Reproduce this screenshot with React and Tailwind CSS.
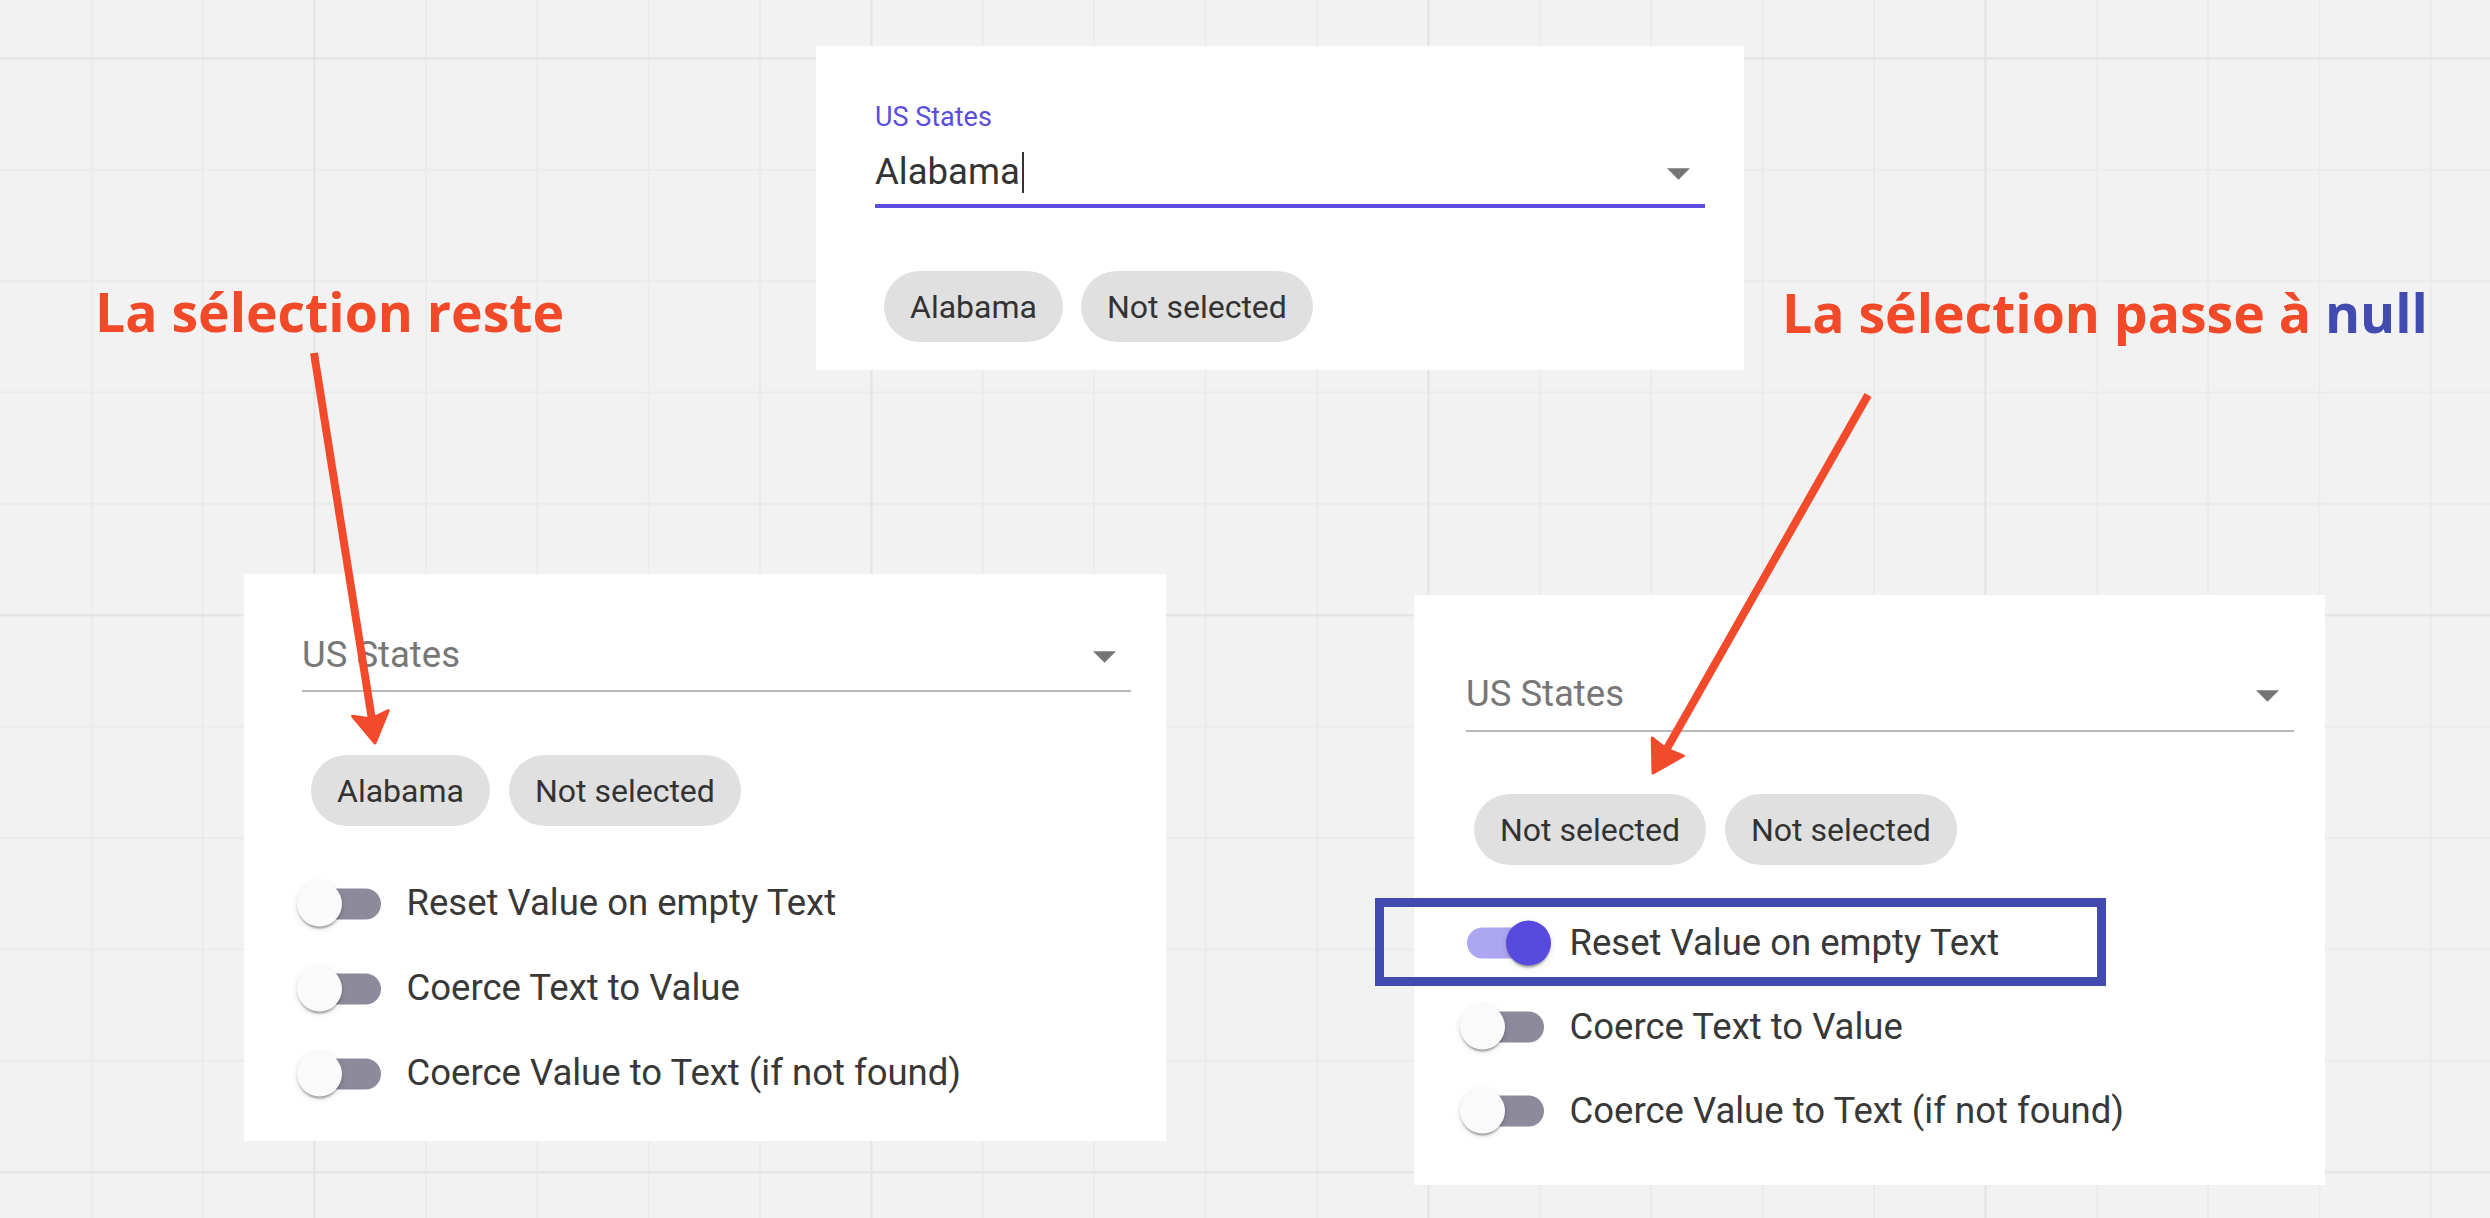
import React from 'react'

const PURPLE = '#5b4de0'

function Caret() {
  return <div className="w-[2px] h-[41px] bg-[#333] ml-[2px]" />
}

function DropArrow() {
  return (
    <svg width="23" height="12" viewBox="0 0 10 5" className="mt-[3px] mr-[15px] shrink-0">
      <path d="M0 0l5 5 5-5z" fill="#757575" />
    </svg>
  )
}

function Chip({ children }) {
  return (
    <div className="h-[71px] px-[26px] rounded-full bg-[#e0e0e0] flex items-center text-[32px] leading-none text-[#333] whitespace-nowrap">
      {children}
    </div>
  )
}

function Switch({ checked }) {
  return (
    <div className="relative w-[130px] h-full shrink-0">
      <div
        className={`absolute left-[27px] top-1/2 -translate-y-1/2 w-[77px] h-[31px] rounded-full ${checked ? 'bg-[#ada6f0]' : 'bg-[#8c8a9b]'}`}
      />
      <div
        className={`absolute top-1/2 -translate-y-1/2 w-[45px] h-[45px] rounded-full shadow-[0_4px_2px_-2px_rgba(0,0,0,0.2),0_2px_2px_0_rgba(0,0,0,0.14),0_2px_7px_0_rgba(0,0,0,0.12)] ${checked ? 'left-[66px] bg-[#584ade]' : 'left-[20.5px] bg-[#fafafa]'}`}
      />
    </div>
  )
}

function Options({ rowH, offset, firstOn }) {
  const rows = ['Reset Value on empty Text', 'Coerce Text to Value', 'Coerce Value to Text (if not found)']
  return (
    <div>
      {rows.map((label, i) => (
        <div key={label} className={`flex items-center ${rowH} ${offset}`}>
          <Switch checked={firstOn && i === 0} />
          <span className="text-[36.5px] leading-none text-[#383838] whitespace-nowrap">{label}</span>
        </div>
      ))}
    </div>
  )
}

export default function App() {
  return (
    <div className="relative w-[2490px] h-[1218px] overflow-hidden bg-[#f2f2f2] [font-family:Roboto,sans-serif] [background-image:linear-gradient(to_right,#e4e4e4_2px,transparent_2px),linear-gradient(to_bottom,#e4e4e4_2px,transparent_2px),linear-gradient(to_right,#ebebeb_2px,transparent_2px),linear-gradient(to_bottom,#ebebeb_2px,transparent_2px)] [background-size:557px_557px,557px_557px,111.4px_111.4px,111.4px_111.4px] [background-position:313.5px_0,0_57.3px,90.7px_0,0_57.3px]">
      <div className="pt-[46px]">
        {/* focused field */}
        <div className="ml-[816px] w-[928px] h-[324px] bg-white pl-[59px] pr-[39px] pt-[58px]">
          <div className="text-[27px] leading-[27px]" style={{ color: PURPLE }}>US States</div>
          <div className="mt-[21px] pb-[11px] border-b-4 border-[#5b4de0]">
            <div className="h-[41px] flex items-center justify-between">
              <div className="flex items-center">
                <span className="text-[36.5px] leading-none text-[#333]">Alabama</span>
                <Caret />
              </div>
              <DropArrow />
            </div>
          </div>
          <div className="mt-[63px] ml-[9px] flex gap-[18px]">
            <Chip>Alabama</Chip>
            <Chip>Not selected</Chip>
          </div>
        </div>

        <div className="flex items-start mt-[204px]">
          {/* selection stays */}
          <div className="ml-[244px] w-[922px] h-[567px] bg-white pl-[58px] pr-[35px] pt-[61px]">
            <div className="pb-[14px] border-b-2 border-[#b8b8b8]">
              <div className="h-[41px] flex items-center justify-between">
                <span className="text-[36.5px] leading-none text-[#777]">US States</span>
                <DropArrow />
              </div>
            </div>
            <div className="mt-[63px] ml-[9px] flex gap-[19px]">
              <Chip>Alabama</Chip>
              <Chip>Not selected</Chip>
            </div>
            <div className="mt-[35px]">
              <Options rowH="h-[85px]" offset="-ml-[25.5px]" />
            </div>
          </div>

          {/* selection goes null */}
          <div className="ml-[248px] mt-[21px] w-[911px] h-[590px] bg-white pl-[52px] pr-[31px] pt-[79px]">
            <div className="pb-[15px] border-b-2 border-[#b8b8b8]">
              <div className="h-[41px] flex items-center justify-between">
                <span className="text-[36.5px] leading-none text-[#777]">US States</span>
                <DropArrow />
              </div>
            </div>
            <div className="mt-[62px] ml-[8px] flex gap-[19px]">
              <Chip>Not selected</Chip>
              <Chip>Not selected</Chip>
            </div>
            <div className="mt-[36px]">
              <Options rowH="h-[84px]" offset="-ml-[26.5px]" firstOn />
            </div>
          </div>
        </div>
      </div>

      {/* annotations */}
      <div className="absolute left-[95px] top-[284.5px] text-[53.5px] leading-none font-bold text-[#f24a29] whitespace-nowrap [font-family:'Open_Sans',sans-serif]">
        La sélection reste
      </div>
      <div className="absolute left-[1782px] top-[285.5px] text-[53.5px] leading-none font-bold text-[#f24a29] whitespace-nowrap [font-family:'Open_Sans',sans-serif]">
        La sélection passe à <span className="text-[#414bb0]">null</span>
      </div>

      <div className="absolute left-[1375px] top-[898px] w-[731px] h-[88px] border-[9px] border-[#414bb0]" />

      <svg className="absolute inset-0 pointer-events-none" width="2490" height="1218">
        <line x1="314" y1="353" x2="372" y2="720" stroke="#f24a2a" strokeWidth="8" />
        <polygon points="375,743 352.6,716.2 371,719 388.2,710.6" fill="#f24a2a" stroke="#f24a2a" strokeWidth="3" strokeLinejoin="round" />
        <line x1="1868" y1="395" x2="1665" y2="752" stroke="#f24a2a" strokeWidth="8" />
        <polygon points="1653,773 1652.2,738 1666,749 1683.4,755.8" fill="#f24a2a" stroke="#f24a2a" strokeWidth="3" strokeLinejoin="round" />
      </svg>
    </div>
  )
}
